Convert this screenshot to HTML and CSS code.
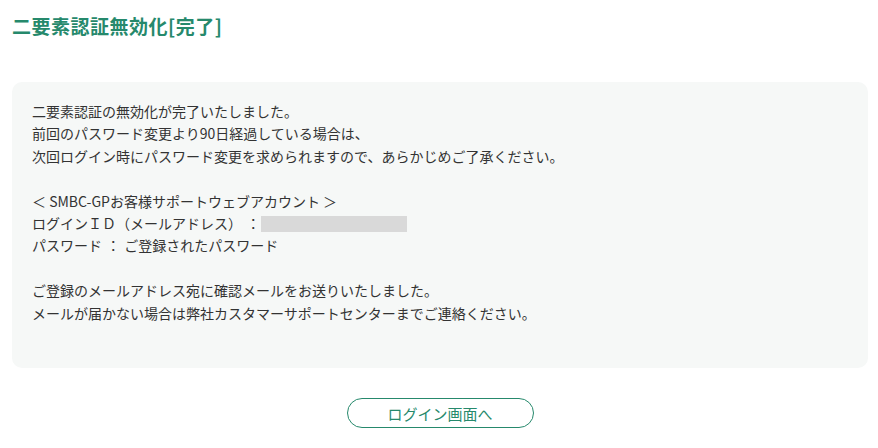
FILE: index.html
```html
<!DOCTYPE html>
<html lang="ja">
<head>
<meta charset="utf-8">
<title>二要素認証無効化[完了]</title>
<link rel="stylesheet" href="styles.css">
</head>
<body>
<div class="page">
  <h1 class="title">二要素認証無効化[完了]</h1>
  <div class="panel">
    <p class="msg">二要素認証の無効化が完了いたしました。<br>前回のパスワード変更より90日経過している場合は、<br>次回ログイン時にパスワード変更を求められますので、あらかじめご了承ください。</p>
    <p class="msg">＜ SMBC-GPお客様サポートウェブアカウント ＞<br>ログインＩＤ（メールアドレス） <span class="colon">：</span><span class="masked"></span><br>パスワード <span class="colon">：</span> ご登録されたパスワード</p>
    <p class="msg">ご登録のメールアドレス宛に確認メールをお送りいたしました。<br>メールが届かない場合は弊社カスタマーサポートセンターまでご連絡ください。</p>
  </div>
  <div class="actions">
    <a class="btn" href="#">ログイン画面へ</a>
  </div>
</div>
</body>
</html>
```

FILE: styles.css
```css
html, body {
  margin: 0;
  padding: 0;
  background: #ffffff;
}

body {
  font-family: "Noto Sans CJK JP", "Noto Sans", sans-serif;
  color: #333333;
}

.page {
  padding: 12px 10px 0 12px;
}

.title {
  margin: 0;
  font-size: 19px;
  line-height: 28px;
  font-weight: bold;
  letter-spacing: 0.5px;
  color: #26896c;
}

.panel {
  margin-top: 42px;
  background: #f6f8f7;
  border-radius: 10px;
  padding: 18px 20px 44px 20px;
}

.msg {
  margin: 0 0 22.4px 0;
  font-size: 14px;
  line-height: 22.4px;
}

.msg:last-child {
  margin-bottom: 0;
}

.colon {
  display: inline-block;
  margin: 0 1px;
}

.masked {
  display: inline-block;
  width: 146px;
  height: 16px;
  background: #d9d9d9;
  vertical-align: -3px;
}

.actions {
  display: flex;
  justify-content: center;
  margin-top: 30px;
}

.btn {
  box-sizing: border-box;
  width: 187px;
  height: 30px;
  border: 1px solid #26896c;
  border-radius: 15px;
  display: flex;
  align-items: center;
  justify-content: center;
  font-size: 15px;
  color: #26896c;
  text-decoration: none;
}
```
